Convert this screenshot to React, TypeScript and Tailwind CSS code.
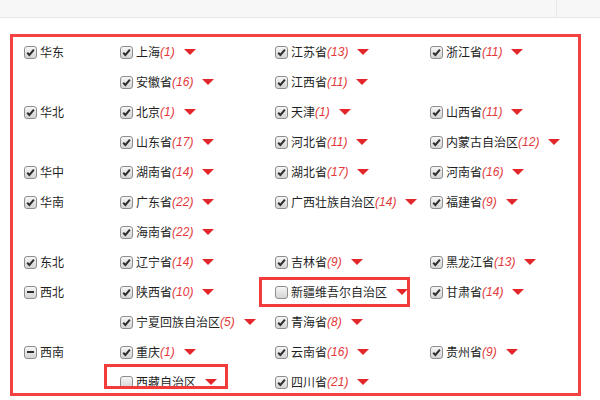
type Province = {
	name: string;
	count?: number;
	checked?: boolean;
	marked?: "wide" | "short";
};

type Region = {
	name: string;
	state: "checked" | "partial";
	provinces: Province[];
};

const regions: Region[] = [
	{
		name: "华东",
		state: "checked",
		provinces: [
			{ name: "上海", count: 1 },
			{ name: "江苏省", count: 13 },
			{ name: "浙江省", count: 11 },
			{ name: "安徽省", count: 16 },
			{ name: "江西省", count: 11 },
		],
	},
	{
		name: "华北",
		state: "checked",
		provinces: [
			{ name: "北京", count: 1 },
			{ name: "天津", count: 1 },
			{ name: "山西省", count: 11 },
			{ name: "山东省", count: 17 },
			{ name: "河北省", count: 11 },
			{ name: "内蒙古自治区", count: 12 },
		],
	},
	{
		name: "华中",
		state: "checked",
		provinces: [
			{ name: "湖南省", count: 14 },
			{ name: "湖北省", count: 17 },
			{ name: "河南省", count: 16 },
		],
	},
	{
		name: "华南",
		state: "checked",
		provinces: [
			{ name: "广东省", count: 22 },
			{ name: "广西壮族自治区", count: 14 },
			{ name: "福建省", count: 9 },
			{ name: "海南省", count: 22 },
		],
	},
	{
		name: "东北",
		state: "checked",
		provinces: [
			{ name: "辽宁省", count: 14 },
			{ name: "吉林省", count: 9 },
			{ name: "黑龙江省", count: 13 },
		],
	},
	{
		name: "西北",
		state: "partial",
		provinces: [
			{ name: "陕西省", count: 10 },
			{ name: "新疆维吾尔自治区", checked: false, marked: "wide" },
			{ name: "甘肃省", count: 14 },
			{ name: "宁夏回族自治区", count: 5 },
			{ name: "青海省", count: 8 },
		],
	},
	{
		name: "西南",
		state: "partial",
		provinces: [
			{ name: "重庆", count: 1 },
			{ name: "云南省", count: 16 },
			{ name: "贵州省", count: 9 },
			{ name: "西藏自治区", checked: false, marked: "short" },
			{ name: "四川省", count: 21 },
		],
	},
];

function Box({ state }: { state: "checked" | "partial" | "empty" }) {
	return (
		<span className="inline-flex h-[13px] w-[13px] shrink-0 items-center justify-center rounded-[3px] border border-[#8e8e8e] bg-linear-to-b from-[#f6f6f6] to-[#d4d4d4]">
			{state === "checked" && (
				<svg width="9" height="9" viewBox="0 0 9 9">
					<path
						d="M1.2 4.8 L3.4 7 L7.9 1.6"
						fill="none"
						stroke="#2e2e2e"
						strokeWidth="2"
					/>
				</svg>
			)}
			{state === "partial" && <span className="h-[2px] w-[7px] bg-[#2e2e2e]" />}
		</span>
	);
}

function Caret() {
	return (
		<svg width="12" height="6" viewBox="0 0 12 6" className="ml-[9px] shrink-0">
			<path d="M0 0 H12 L6 6 Z" fill="#e3262a" />
		</svg>
	);
}

function ProvinceItem({ p }: { p: Province }) {
	const checked = p.checked !== false;
	return (
		<div className="flex h-[30px] items-center whitespace-nowrap">
			<div className="relative flex h-[13px] items-center">
				{p.marked === "wide" && (
					<span className="absolute -left-[16px] -top-[9px] h-[30px] w-[151px] border-[3px] border-[#f23b3b]" />
				)}
				{p.marked === "short" && (
					<span className="absolute -left-[16px] -top-[12px] h-[25px] w-[124px] border-[3px] border-[#f23b3b]" />
				)}
				<Box state={checked ? "checked" : "empty"} />
				<span className="ml-[3px] text-[#1f1f1f]">{p.name}</span>
				{p.count !== undefined && (
					<span className="font-['Liberation_Sans',sans-serif] italic text-[#e4393c]">
						({p.count})
					</span>
				)}
				<Caret />
			</div>
		</div>
	);
}

export default function App() {
	return (
		<div className="h-[400px] w-[600px] overflow-hidden bg-white font-['Noto_Sans_CJK_SC','Microsoft_YaHei',sans-serif] text-[12px] leading-none">
			<div className="flex h-[18px] border-b border-[#e6e6e6] bg-[#f7f7f7]">
				<div className="w-[557px] overflow-hidden border-r border-[#e8e8e8] pl-[20px]">
					<span className="-mt-[12px] block text-[12px] text-[#333]">▪ 区域选择</span>
				</div>
			</div>
			<div className="ml-[10px] mt-[16px] h-[362px] w-[571px] border-[3px] border-[#f44141] pl-[11px]">
				{regions.map((r) => (
					<div key={r.name} className="flex">
						<div className="flex h-[30px] w-[96px] shrink-0 items-center">
							<Box state={r.state} />
							<span className="ml-[3px] text-[#1f1f1f]">{r.name}</span>
						</div>
						<div className="grid grid-cols-[155px_155px_120px]">
							{r.provinces.map((p) => (
								<ProvinceItem key={p.name} p={p} />
							))}
						</div>
					</div>
				))}
			</div>
		</div>
	);
}
